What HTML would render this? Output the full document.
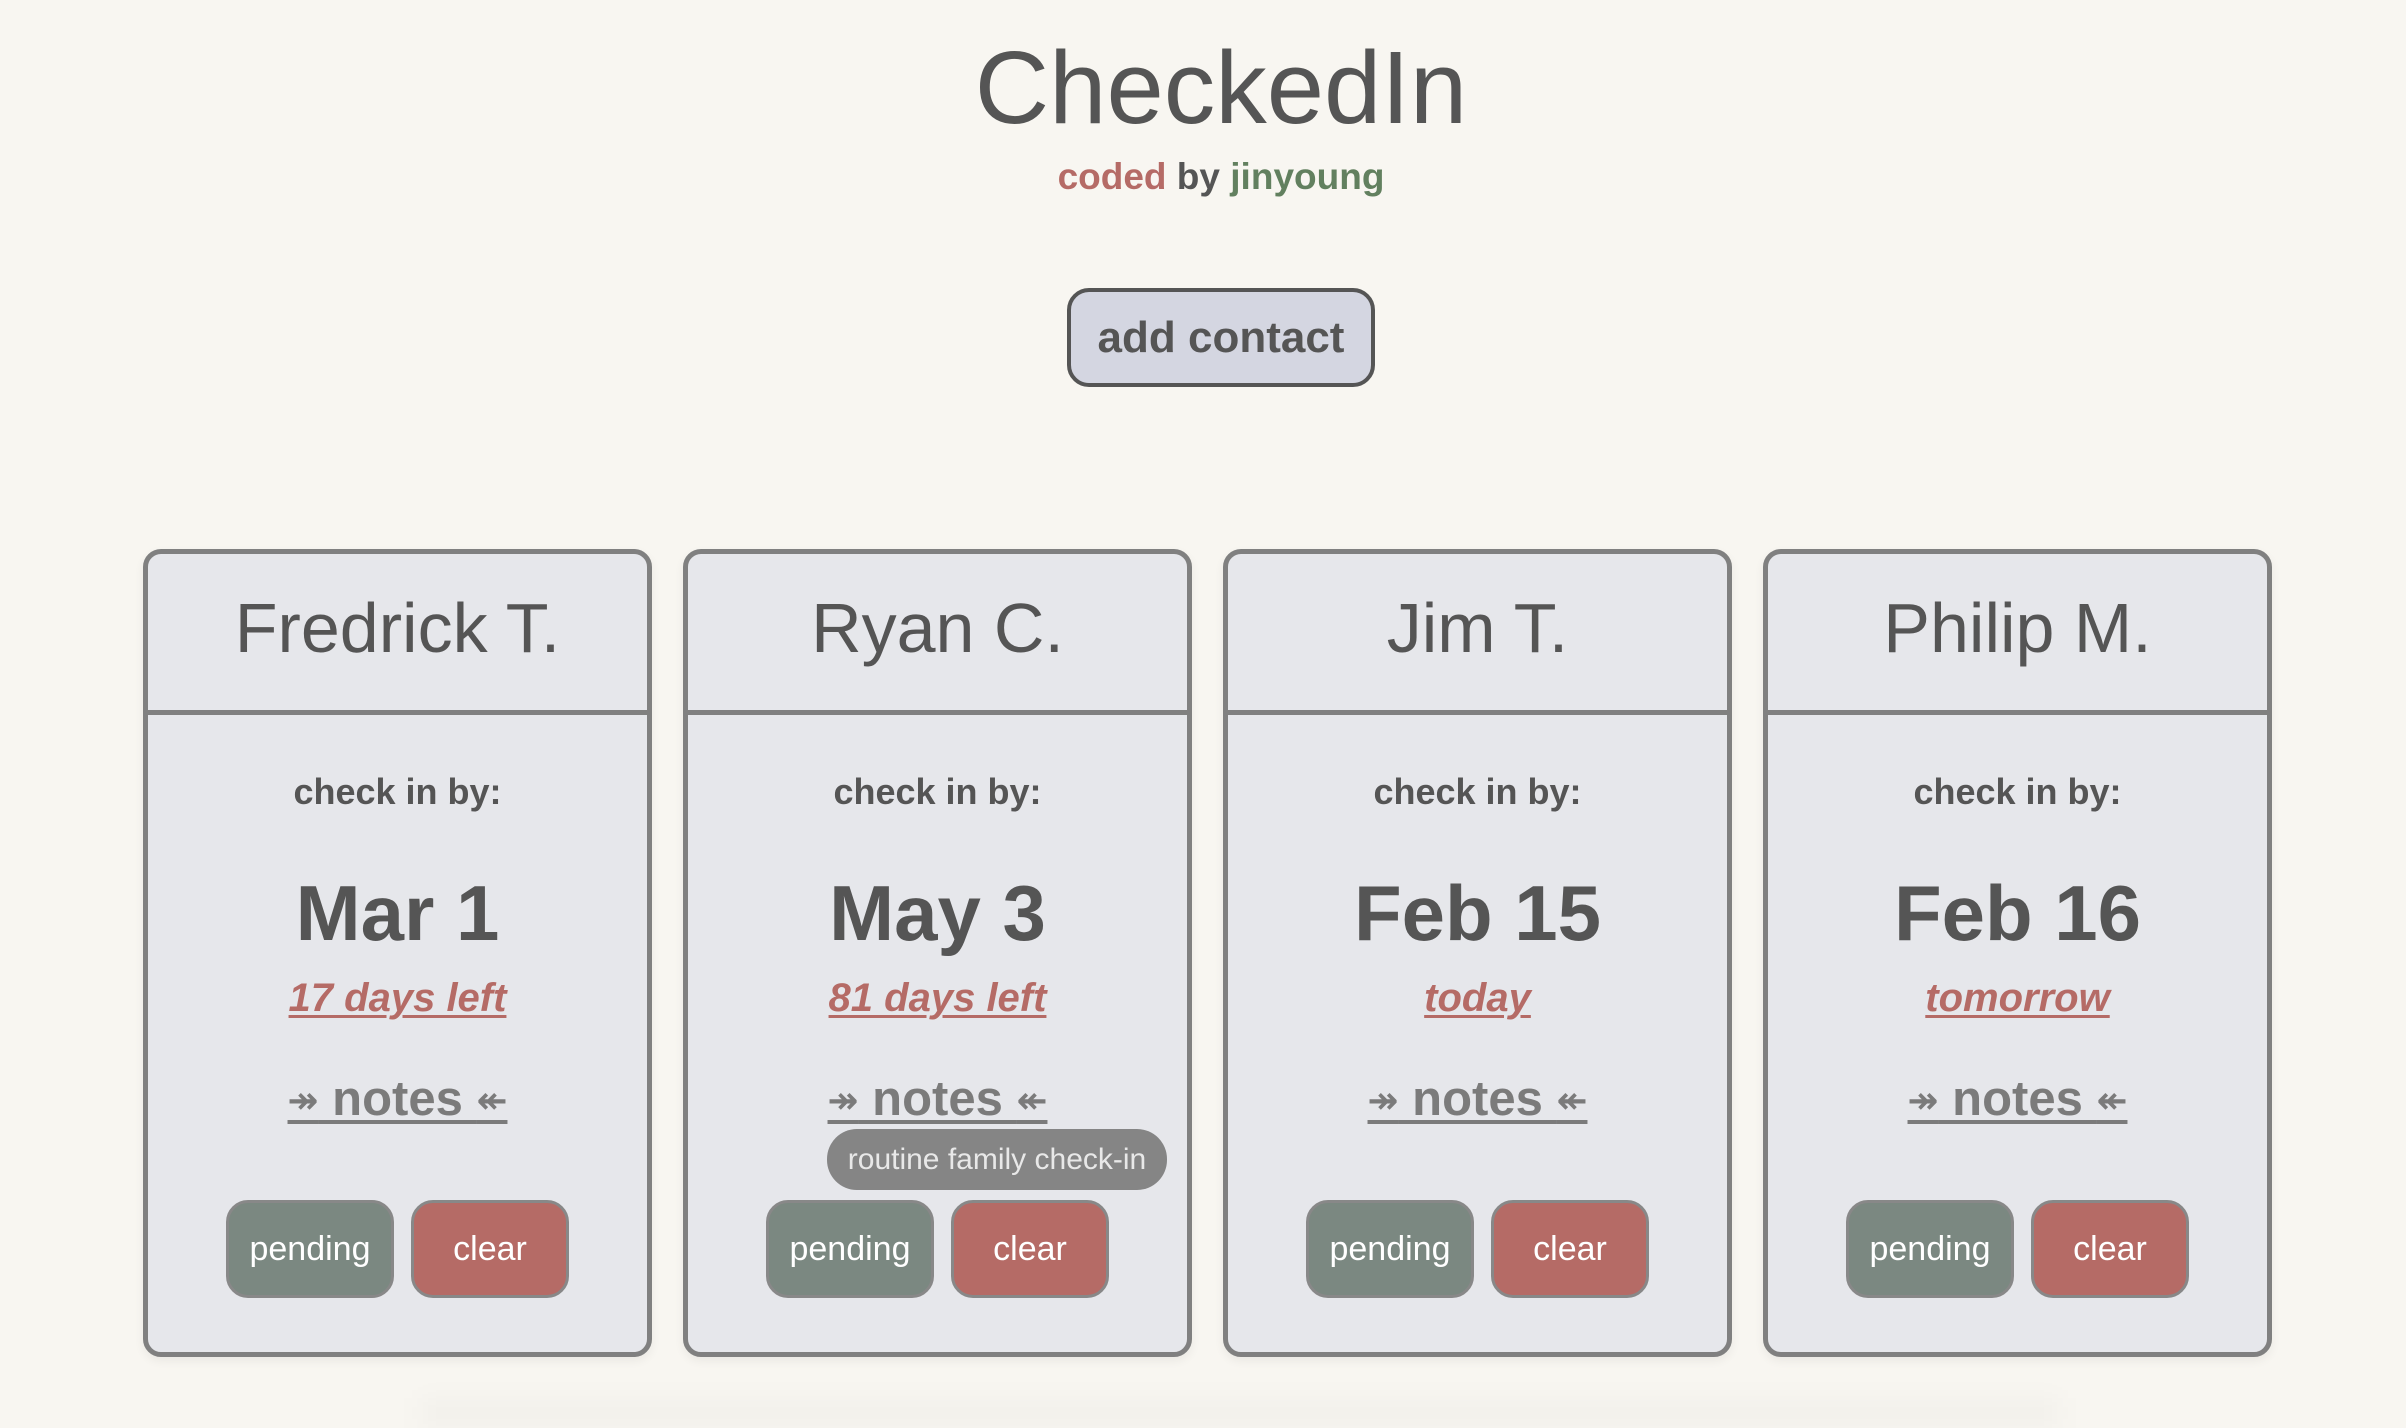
<!DOCTYPE html>
<html><head><meta charset="utf-8">
<style>
html,body{margin:0;padding:0}
body{width:2406px;height:1406px;background:#f8f6f1;position:relative;overflow:hidden;font-family:"Liberation Sans",Arial,sans-serif;color:#555}
.abs{position:absolute;line-height:1;white-space:nowrap}
.c{text-align:center}
.title{left:18px;width:2406px;top:36px;font-size:103px}
.sub{left:18px;width:2406px;top:158px;font-size:37px;font-weight:bold}
.btn{position:absolute;left:1067px;top:288px;width:308px;height:99px;box-sizing:border-box;background:#d4d6e1;border:4px solid #555;border-radius:22px;display:flex;align-items:center;justify-content:center;font-size:44px;font-weight:bold;color:#555}
.card{position:absolute;top:549px;width:509px;height:808px;box-sizing:border-box;background:#e6e7eb;border:5px solid #808080;border-radius:18px;box-shadow:0 4px 10px rgba(0,0,0,0.06)}
.card .hr{position:absolute;left:0;right:0;top:156px;height:5px;background:#808080}
.card .t{position:absolute;left:0;width:499px;text-align:center;line-height:1;white-space:nowrap}
.name{top:39px;font-size:70px}
.chk{top:220px;font-size:36px;font-weight:bold}
.date{top:320px;font-size:78px;font-weight:bold}
.days{top:424px;font-size:40px;font-weight:bold;font-style:italic;color:#b56b66;text-decoration:underline;text-decoration-thickness:3px;text-underline-offset:4px}
.notes{top:521px;font-size:49px;font-weight:bold;color:#7b7b7b;text-decoration:underline;text-decoration-thickness:4px;text-underline-offset:5px}
.notes .ar{font-family:"DejaVu Sans",sans-serif;font-size:37px;font-weight:bold;vertical-align:2px}
.b{position:absolute;top:646px;height:98px;box-sizing:border-box;border:3px solid #888;border-radius:22px;display:flex;align-items:center;justify-content:center;color:#fff;font-size:34px}
.pend{left:78px;width:168px;background:#7b8881}
.clr{left:263px;width:158px;background:#b56b66}
.tip{position:absolute;left:139px;top:575px;width:340px;height:61px;border-radius:30px;background:#858585;color:#e8e8e8;font-size:30px;display:flex;align-items:center;justify-content:center;z-index:2}
.shade{position:absolute;left:420px;top:1398px;width:1640px;height:30px;background:rgba(0,0,0,0.025);filter:blur(12px)}
</style></head><body>
<div class="abs c title">CheckedIn</div>
<div class="abs c sub"><span style="color:#b56b66">coded</span> by <span style="color:#62805f">jinyoung</span></div>
<div class="btn">add contact</div>

<div class="card" style="left:143px">
<div class="t name">Fredrick T.</div><div class="hr"></div>
<div class="t chk">check in by:</div>
<div class="t date">Mar 1</div>
<div class="t days">17 days left</div>
<div class="t notes"><span class="ar">↠</span> notes <span class="ar">↞</span></div>
<div class="b pend">pending</div><div class="b clr">clear</div>
</div>

<div class="card" style="left:683px">
<div class="t name">Ryan C.</div><div class="hr"></div>
<div class="t chk">check in by:</div>
<div class="t date">May 3</div>
<div class="t days">81 days left</div>
<div class="t notes"><span class="ar">↠</span> notes <span class="ar">↞</span></div>
<div class="tip">routine family check-in</div>
<div class="b pend">pending</div><div class="b clr">clear</div>
</div>

<div class="card" style="left:1223px">
<div class="t name">Jim T.</div><div class="hr"></div>
<div class="t chk">check in by:</div>
<div class="t date">Feb 15</div>
<div class="t days">today</div>
<div class="t notes"><span class="ar">↠</span> notes <span class="ar">↞</span></div>
<div class="b pend">pending</div><div class="b clr">clear</div>
</div>

<div class="card" style="left:1763px">
<div class="t name">Philip M.</div><div class="hr"></div>
<div class="t chk">check in by:</div>
<div class="t date">Feb 16</div>
<div class="t days">tomorrow</div>
<div class="t notes"><span class="ar">↠</span> notes <span class="ar">↞</span></div>
<div class="b pend">pending</div><div class="b clr">clear</div>
</div>
<div class="shade"></div>
</body></html>
